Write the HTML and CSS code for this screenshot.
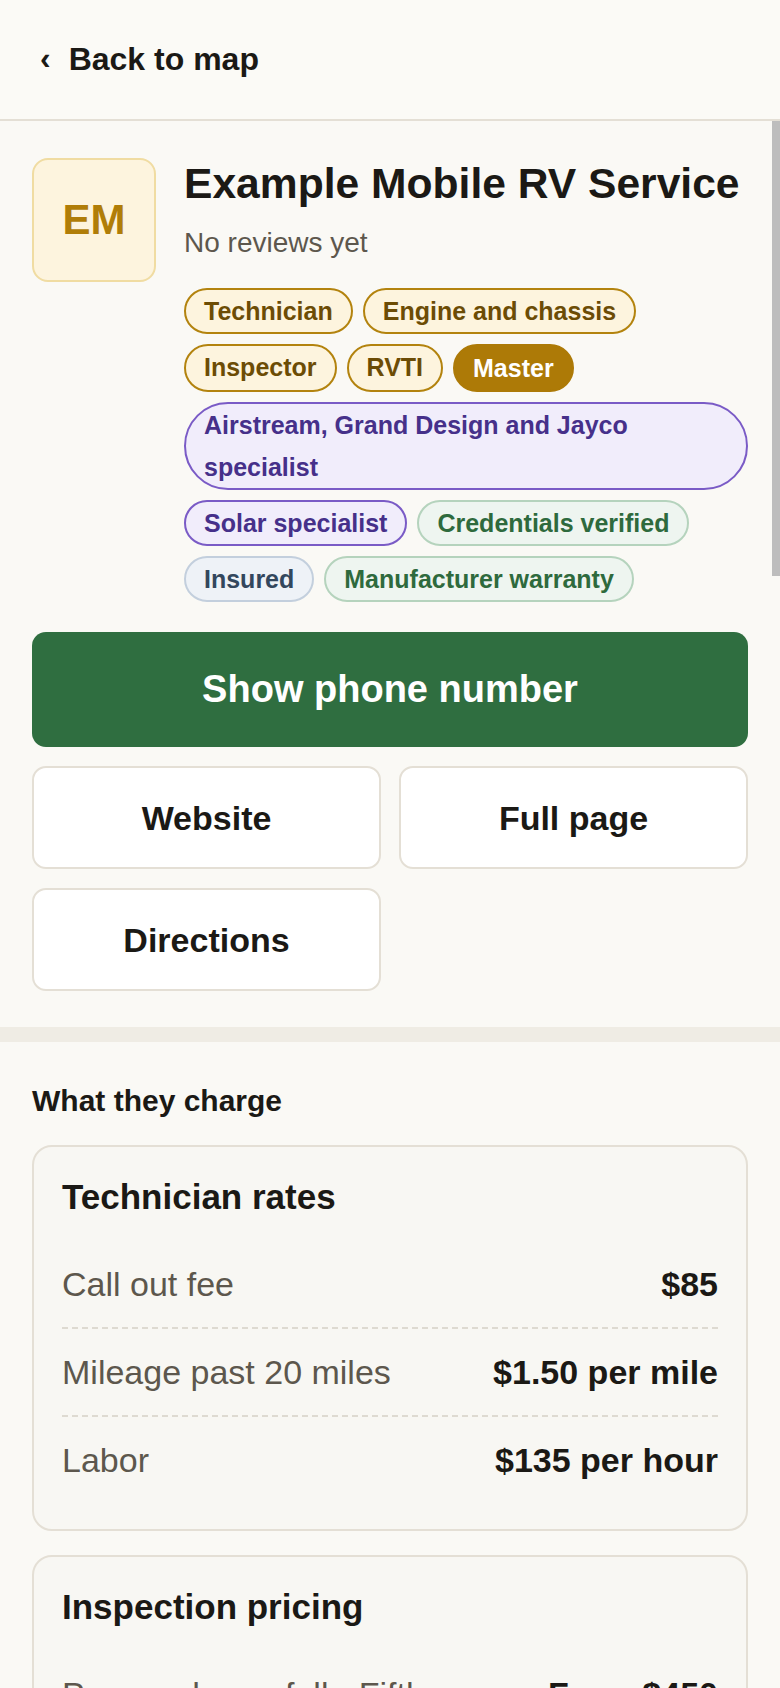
FILE: index.html
```html
<!DOCTYPE html>
<html lang="en">
<head>
    <meta charset="UTF-8">
    <meta name="viewport" content="width=device-width, initial-scale=1.0">
    <title>Example Mobile RV Service</title>
    <link rel="stylesheet" href="styles.css">
</head>
<body>

<header class="topbar">
    <a class="back" href="#"><span class="chev">&lsaquo;</span>Back to map</a>
</header>

<main class="sheet">
    <div class="scroll-thumb"></div>

    <section class="profile">
        <div class="head">
            <div class="avatar">EM</div>
            <div class="info">
                <h1>Example Mobile RV Service</h1>
                <p class="reviews">No reviews yet</p>
                <ul class="tags">
                    <li class="tag gold">Technician</li>
                    <li class="tag gold">Engine and chassis</li>
                    <li class="tag gold">Inspector</li>
                    <li class="tag gold">RVTI</li>
                    <li class="tag solid">Master</li>
                    <li class="tag purple">Airstream, Grand Design and Jayco specialist</li>
                    <li class="tag purple">Solar specialist</li>
                    <li class="tag green">Credentials verified</li>
                    <li class="tag slate">Insured</li>
                    <li class="tag green">Manufacturer warranty</li>
                </ul>
            </div>
        </div>

        <button class="call">Show phone number</button>

        <div class="actions">
            <a class="action" href="#">Website</a>
            <a class="action" href="#">Full page</a>
            <a class="action" href="#">Directions</a>
        </div>
    </section>

    <section class="pricing">
        <h2>What they charge</h2>

        <div class="card">
            <h3>Technician rates</h3>
            <div class="row"><span class="label">Call out fee</span><span class="value">$85</span></div>
            <div class="row"><span class="label">Mileage past 20 miles</span><span class="value">$1.50 per mile</span></div>
            <div class="row"><span class="label">Labor</span><span class="value">$135 per hour</span></div>
        </div>

        <div class="card">
            <h3>Inspection pricing</h3>
            <div class="row"><span class="label">Pre-purchase, full - Fifth wheel</span><span class="value">From $450</span></div>
            <div class="row"><span class="label">Pre-purchase, full - Travel trailer</span><span class="value">From $400</span></div>
        </div>
    </section>
</main>

</body>
</html>
```

FILE: styles.css
```css
*{
    margin: 0;
    padding: 0;
    box-sizing: border-box;
    font-family: "Liberation Sans", Arial, sans-serif;
}

body{
    background: #faf9f5;
    color: #1b1915;
    position: relative;
}

a{
    color: inherit;
    text-decoration: none;
}

/* top bar */
.topbar{
    height: 121px;
    background: #fbfaf6;
    border-bottom: 2px solid #e4dfd5;
    display: flex;
    align-items: center;
    padding: 0 40px;
}
.back{
    font-size: 32px;
    font-weight: bold;
    display: flex;
    align-items: center;
}
.chev{
    font-size: 32px;
    margin-right: 18px;
    position: relative;
    top: -1px;
}

.sheet{
    position: relative;
}
.scroll-thumb{
    position: absolute;
    right: 0;
    top: 0;
    width: 8px;
    height: 455px;
    background: #bdbdbd;
}

/* profile */
.profile{
    padding: 37px 32px 36px;
    border-bottom: 15px solid #efece4;
}
.head{
    display: flex;
    gap: 28px;
    margin-bottom: 30px;
}
.avatar{
    flex: 0 0 124px;
    height: 124px;
    border: 2px solid #f0dca2;
    background: #fdf4de;
    border-radius: 16px;
    display: flex;
    align-items: center;
    justify-content: center;
    font-size: 42px;
    font-weight: bold;
    color: #b07d08;
}
.info{
    flex: 1;
}
.info h1{
    font-size: 42.6px;
    line-height: 50px;
    margin-bottom: 15px;
}
.reviews{
    font-size: 28px;
    line-height: 40px;
    color: #5d574d;
    margin-bottom: 25px;
}
.tags{
    list-style: none;
    display: flex;
    flex-wrap: wrap;
    gap: 10px;
}
.tag{
    font-size: 25px;
    font-weight: bold;
    line-height: 42px;
    padding: 0 18px;
    border: 2px solid;
    border-radius: 46px;
}
.tag.gold{
    background: #fdf4de;
    border-color: #b3830e;
    color: #6c4c05;
}
.tag.solid{
    background: #ad7a07;
    border-color: #ad7a07;
    color: #fff;
    padding: 1px 18px;
}
.tag.purple{
    background: #f1edfb;
    border-color: #7a5bc6;
    color: #46308a;
}
.tag.green{
    background: #eef5f0;
    border-color: #b5d3bd;
    color: #2e6a3d;
}
.tag.slate{
    background: #eef2f7;
    border-color: #c3cfdd;
    color: #33475d;
}

.call{
    display: block;
    width: 100%;
    border: none;
    background: #2f6e40;
    color: #fff;
    font-size: 38px;
    font-weight: bold;
    line-height: 45px;
    padding: 35px 20px;
    border-radius: 14px;
    margin-bottom: 19px;
}
.actions{
    display: grid;
    grid-template-columns: 1fr 1fr;
    gap: 19px 18px;
}
.action{
    display: block;
    background: #fff;
    border: 2px solid #e4dfd5;
    border-radius: 14px;
    text-align: center;
    font-size: 34px;
    font-weight: bold;
    line-height: 40px;
    padding: 29.5px 10px;
}

/* pricing */
.pricing{
    padding: 40px 32px;
}
.pricing h2{
    font-size: 30px;
    line-height: 38px;
    margin-bottom: 25px;
}
.card{
    background: #f8f7f3;
    border: 2px solid #e4dfd5;
    border-radius: 20px;
    padding: 30px 28px 26px;
    margin-bottom: 24px;
}
.card h3{
    font-size: 35px;
    line-height: 40px;
    margin-bottom: 24px;
}
.row{
    display: flex;
    justify-content: space-between;
    align-items: flex-start;
    gap: 32px;
    padding: 23px 0;
    border-bottom: 2px dashed #dedad1;
    font-size: 34px;
    line-height: 40px;
}
.row:last-child{
    border-bottom: none;
}
.label{
    color: #5d574d;
}
.value{
    font-weight: bold;
    white-space: nowrap;
}
```
